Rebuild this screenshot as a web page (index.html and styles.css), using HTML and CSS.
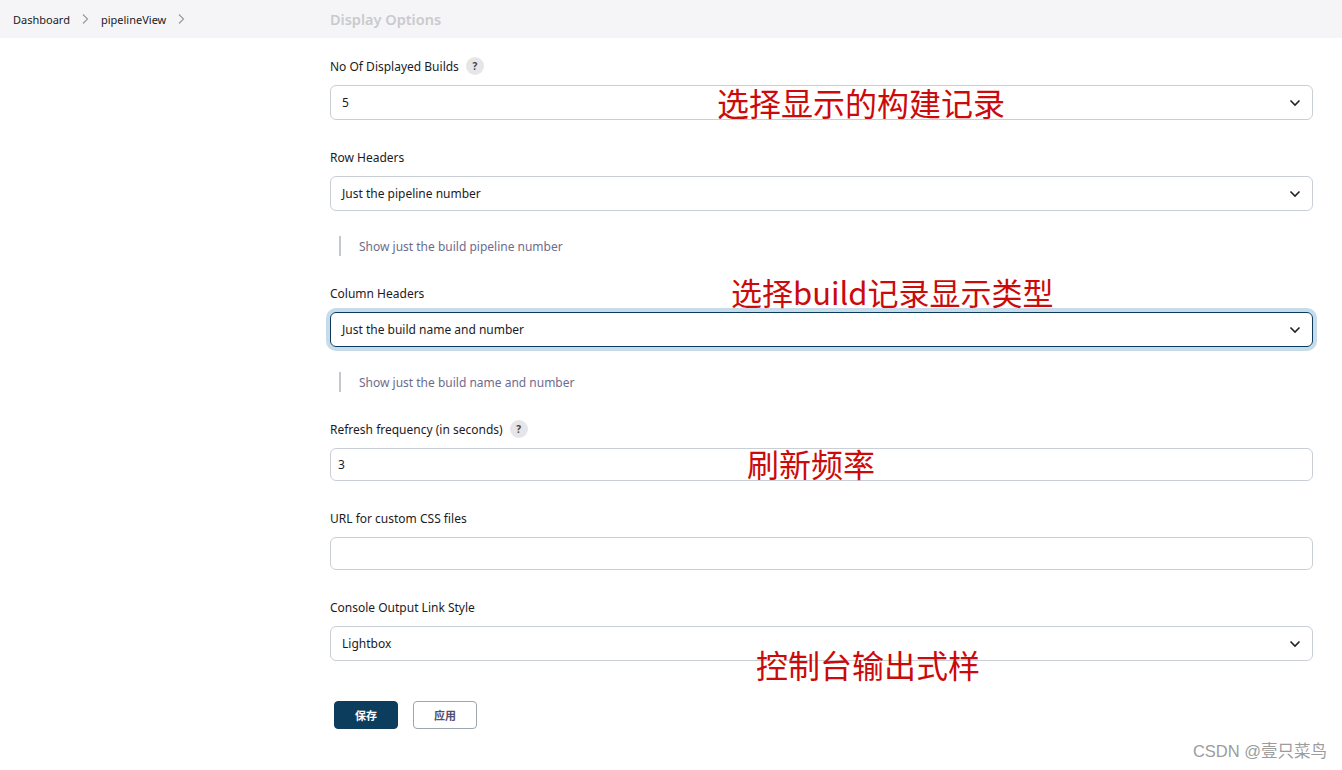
FILE: index.html
```html
<!DOCTYPE html>
<html lang="zh">
<head>
<meta charset="utf-8">
<title>pipelineView - Display Options</title>
<link rel="stylesheet" href="styles.css">
</head>
<body>
<header class="topbar">
  <nav class="crumbs">
    <a class="crumb" href="#">Dashboard</a>
    <svg class="sep" viewBox="0 0 8 12" width="8" height="12"><path d="M2 1.5 L6.5 6 L2 10.5" fill="none" stroke="#9a9aa0" stroke-width="1.2"/></svg>
    <a class="crumb" href="#">pipelineView</a>
    <svg class="sep" viewBox="0 0 8 12" width="8" height="12"><path d="M2 1.5 L6.5 6 L2 10.5" fill="none" stroke="#9a9aa0" stroke-width="1.2"/></svg>
  </nav>
  <div class="section-title">Display Options</div>
</header>

<main class="form">
  <div class="field">
    <div class="label">No Of Displayed Builds <span class="help">?</span></div>
    <div class="select"><span>5</span><svg class="chev" viewBox="0 0 12 8" width="12" height="8"><path d="M1.5 1.5 L6 6 L10.5 1.5" fill="none" stroke="#222" stroke-width="1.6"/></svg></div>
  </div>

  <div class="field">
    <div class="label">Row Headers</div>
    <div class="select"><span>Just the pipeline number</span><svg class="chev" viewBox="0 0 12 8" width="12" height="8"><path d="M1.5 1.5 L6 6 L10.5 1.5" fill="none" stroke="#222" stroke-width="1.6"/></svg></div>
    <div class="hint">Show just the build pipeline number</div>
  </div>

  <div class="field">
    <div class="label">Column Headers</div>
    <div class="select focused"><span>Just the build name and number</span><svg class="chev" viewBox="0 0 12 8" width="12" height="8"><path d="M1.5 1.5 L6 6 L10.5 1.5" fill="none" stroke="#222" stroke-width="1.6"/></svg></div>
    <div class="hint">Show just the build name and number</div>
  </div>

  <div class="field">
    <div class="label">Refresh frequency (in seconds) <span class="help">?</span></div>
    <div class="input">3</div>
  </div>

  <div class="field">
    <div class="label">URL for custom CSS files</div>
    <div class="input"></div>
  </div>

  <div class="field">
    <div class="label">Console Output Link Style</div>
    <div class="select"><span>Lightbox</span><svg class="chev" viewBox="0 0 12 8" width="12" height="8"><path d="M1.5 1.5 L6 6 L10.5 1.5" fill="none" stroke="#222" stroke-width="1.6"/></svg></div>
  </div>

  <div class="buttons">
    <button class="btn primary">保存</button>
    <button class="btn">应用</button>
  </div>
</main>

<div class="note n1">选择显示的构建记录</div>
<div class="note n2">选择build记录显示类型</div>
<div class="note n3">刷新频率</div>
<div class="note n4">控制台输出式样</div>
<div class="watermark">CSDN @壹只菜鸟</div>
</body>
</html>
```

FILE: styles.css
```css
html, body {
  margin: 0;
  padding: 0;
  background: #ffffff;
  font-family: "Noto Sans", "Open Sans", "Noto Sans CJK SC", sans-serif;
  color: #1b1b24;
  height: 770px;
  overflow: hidden;
  position: relative;
}

.topbar {
  height: 38px;
  background: #f5f5f7;
  display: flex;
  align-items: center;
}

.crumbs {
  width: 330px;
  display: flex;
  align-items: center;
  padding-left: 13px;
  box-sizing: border-box;
}

.crumb {
  font-size: 11px;
  color: #1a1a22;
  text-decoration: none;
}

.sep {
  margin: 0 12px 0 11px;
}

.section-title {
  font-size: 14.5px;
  font-weight: 600;
  color: #cacace;
}

.form {
  margin-left: 330px;
  width: 983px;
  padding-top: 18px;
}

.field {
  margin-bottom: 27px;
}

.label {
  height: 20px;
  display: flex;
  align-items: center;
  font-size: 12px;
  color: #1b1b24;
  margin-bottom: 9px;
}

.help {
  display: inline-flex;
  align-items: center;
  justify-content: center;
  width: 18px;
  height: 18px;
  border-radius: 50%;
  background: #e6e6e8;
  color: #444;
  font-size: 10px;
  font-weight: 700;
  margin-left: 7px;
}

.select {
  height: 35px;
  box-sizing: border-box;
  border: 1px solid #c9cfd5;
  border-radius: 6px;
  display: flex;
  align-items: center;
  justify-content: space-between;
  padding: 0 11px;
  font-size: 12px;
  color: #1b1b24;
}

.select.focused {
  border: 1.5px solid #0b3a5c;
  box-shadow: 0 0 0 4px #c6dcea;
}

.input {
  height: 33px;
  box-sizing: border-box;
  border: 1px solid #c9cfd5;
  border-radius: 6px;
  display: flex;
  align-items: center;
  padding: 0 7px;
  font-size: 12px;
  color: #1b1b24;
}

.hint {
  margin-top: 25px;
  margin-left: 9px;
  border-left: 2px solid #c2c8ce;
  height: 20px;
  display: flex;
  align-items: center;
  padding-left: 18px;
  font-size: 12px;
  color: #6e6c8c;
}

.buttons {
  display: flex;
  gap: 15px;
  margin-left: 4px;
  margin-top: 40px;
}

.btn {
  width: 64px;
  height: 28px;
  border-radius: 4px;
  border: 1px solid #9ba6ae;
  background: #ffffff;
  color: #4f5070;
  font-family: "Noto Sans CJK SC", sans-serif;
  font-size: 11px;
  font-weight: 700;
  padding: 0;
}

.btn.primary {
  background: #0c3d5d;
  border-color: #0c3d5d;
  color: #ffffff;
}

.note {
  position: absolute;
  font-family: "Noto Sans CJK SC", sans-serif;
  font-size: 32px;
  line-height: 32px;
  color: #cc0a0a;
  white-space: nowrap;
}

.n1 { left: 717px; top: 86px; }
.n2 { left: 731px; top: 276px; font-size: 31px; }
.n3 { left: 747px; top: 447px; }
.n4 { left: 756px; top: 648px; }

.watermark {
  position: absolute;
  right: 15px;
  top: 741px;
  font-family: "Liberation Sans", "Noto Sans CJK SC", sans-serif;
  font-size: 16.5px;
  line-height: 20px;
  color: #9c9c9c;
}
```
